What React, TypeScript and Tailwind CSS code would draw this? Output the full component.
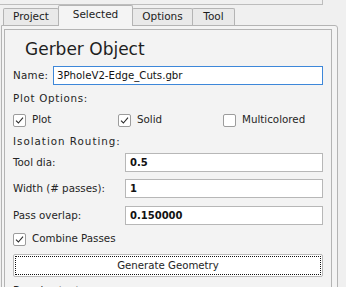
import React from 'react';

const font = { fontFamily: '"DejaVu Sans", Verdana, sans-serif' };

function Check({ checked, label, className = '' }: { checked: boolean; label: string; className?: string }) {
  return (
    <div className={`flex items-center gap-[6px] ${className}`}>
      <span className="flex h-[13px] w-[13px] items-center justify-center rounded-[2px] border border-[#9c9c9c] bg-white">
        {checked && (
          <svg width="9" height="9" viewBox="0 0 9 9" fill="none">
            <path d="M1 4.6 L3.4 7 L8 1.6" stroke="#2a2a2a" strokeWidth="1.1" />
          </svg>
        )}
      </span>
      <span className="text-[10.3px] text-[#252525]">{label}</span>
    </div>
  );
}

function Field({ label, value, mt }: { label: string; value: string; mt: string }) {
  return (
    <div className={`flex h-[19px] items-center ${mt}`}>
      <span className="w-[112px] text-[10.3px] text-[#252525]">{label}</span>
      <div className="flex h-[19px] flex-1 items-center border border-[#b7b7b7] bg-white pl-[4px] text-[10px] font-semibold text-[#111]">
        {value}
      </div>
    </div>
  );
}

export default function App() {
  const tabs = ['Project', 'Selected', 'Options', 'Tool'];
  return (
    <div className="h-[287px] w-[346px] overflow-hidden bg-[#f0f0f0]" style={font}>
      <div className="h-[5px] w-[323px] border-b border-r border-[#bdbdbd]" />

      {/* tab bar */}
      <div className="flex h-[20px] items-end pl-[3px]">
        {tabs.map((t) => {
          const sel = t === 'Selected';
          const w = t === 'Project' ? 'w-[56px]' : t === 'Selected' ? 'w-[75px]' : t === 'Options' ? 'w-[61px]' : 'w-[43px]';
          return (
            <div
              key={t}
              className={`${w} -ml-px flex items-center justify-center rounded-t-[2px] border border-b-0 border-[#b4b4b4] text-[10.5px] text-[#1c1c1c] first:ml-0 ${
                sel ? 'relative z-10 -mb-px h-[21px] bg-[#f4f4f4] pb-[3px]' : 'h-[17px] bg-[#e9e9e9]'
              }`}
            >
              {t}
            </div>
          );
        })}
      </div>

      {/* panel */}
      <div className="ml-px h-[270px] w-[337px] rounded-tr-[3px] border border-[#b4b4b4] bg-[#f4f4f4] pl-[2px] pt-[3px]">
        <div className="h-[266px] w-[328px] border border-[#b4b4b4] bg-[#f3f3f3] pl-[8px] pr-[8px]">
          <div className="mt-[9px] flex h-[21px] items-center pl-[12px] text-[17px] leading-none text-[#1e1e1e]">
            Gerber Object
          </div>

          <div className="mt-[6px] flex h-[19px] items-center">
            <span className="w-[40px] text-[10.3px] tracking-[0.3px] text-[#252525]">Name:</span>
            <div className="flex h-[19px] flex-1 items-center border border-[#3d87d9] bg-white pl-[3px] text-[10.2px] text-[#111]">
              3PholeV2-Edge_Cuts.gbr
            </div>
          </div>

          <div className="mt-[5px] flex h-[18px] items-center text-[10.3px] tracking-[0.7px] text-[#252525]">
            Plot Options:
          </div>

          <div className="mt-[3px] flex h-[18px] items-center">
            <Check checked label="Plot" className="w-[105px]" />
            <Check checked label="Solid" className="w-[105px]" />
            <Check checked={false} label="Multicolored" />
          </div>

          <div className="mt-[4px] flex h-[18px] items-center text-[10.3px] tracking-[1px] text-[#252525]">
            Isolation Routing:
          </div>

          <Field label="Tool dia:" value="0.5" mt="mt-[2px]" />
          <Field label="Width (# passes):" value="1" mt="mt-[7px]" />
          <Field label="Pass overlap:" value="0.150000" mt="mt-[8px]" />

          <div className="mt-[5px] flex h-[18px] items-center">
            <Check checked label="Combine Passes" />
          </div>

          <div className="mt-[6px] h-[23px] rounded-[2px] border border-[#b9b9b9] bg-white p-px">
            <div className="flex h-full items-center justify-center border border-dotted border-[#111] text-[10.2px] text-[#1e1e1e]">
              Generate Geometry
            </div>
          </div>

          <div className="mt-[6px] text-[10.3px] text-[#252525]">Board cutout:</div>
        </div>
      </div>
    </div>
  );
}
